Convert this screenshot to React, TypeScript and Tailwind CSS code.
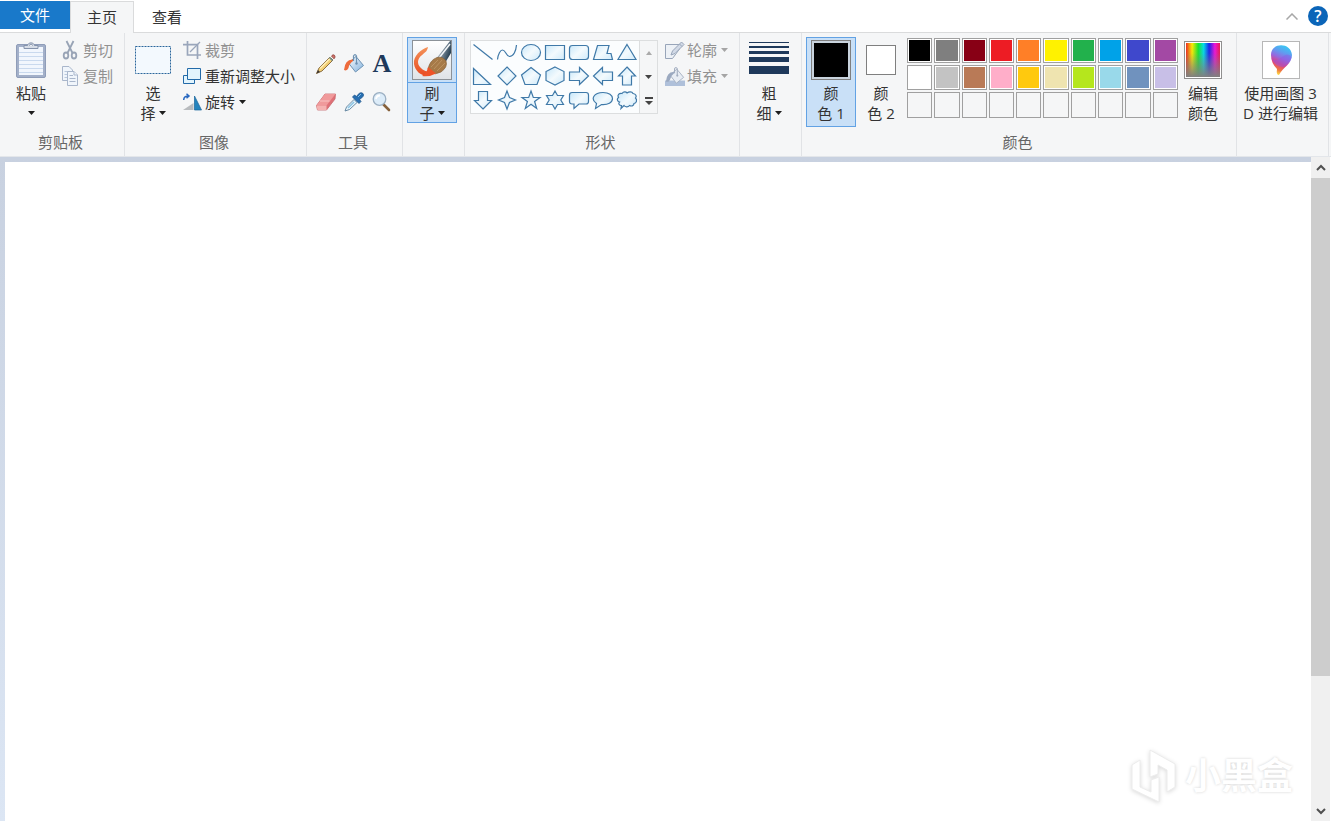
import type { ReactNode } from 'react';

const swatches = [
  '#000000', '#7f7f7f', '#880015', '#ed1c24', '#ff7f27', '#fff200', '#22b14c', '#00a2e8', '#3f48cc', '#a349a4',
  '#ffffff', '#c3c3c3', '#b97a57', '#ffaec9', '#ffc90e', '#efe4b0', '#b5e61d', '#99d9ea', '#7092be', '#c8bfe7',
];

const shapes = [
  { name: '直线', d: 'M2.5 3.5L21.5 18.5' },
  { name: '曲线', d: 'M2.5 18.5C3 13 5.5 9 7.5 9C11 9 11 15.5 14.5 15.5C18.5 15.5 21 10 21.5 4', open: true },
  { name: '椭圆形', d: 'M2.5 11.5A9.5 8 0 1 1 21.5 11.5A9.5 8 0 1 1 2.5 11.5Z' },
  { name: '矩形', d: 'M2.5 4.5H21.5V18.5H2.5Z' },
  { name: '圆角矩形', d: 'M5.5 4.5H18.5Q21.5 4.5 21.5 7.5V15.5Q21.5 18.5 18.5 18.5H5.5Q2.5 18.5 2.5 15.5V7.5Q2.5 4.5 5.5 4.5Z' },
  { name: '多边形', d: 'M2.5 18.5L6.5 4.5H18L16 12.5H20L21.5 18.5Z' },
  { name: '三角形', d: 'M12 3.5L21 18.5H3Z' },
  { name: '直角三角形', d: 'M2.5 3.5L19.5 19.5H2.5Z' },
  { name: '菱形', d: 'M12 2L21 11L12 20L3 11Z' },
  { name: '五边形', d: 'M12 2.5L21.5 10L18 19.5H6L2.5 10Z' },
  { name: '六边形', d: 'M12 2L21 6.5V15.5L12 20L3 15.5V6.5Z' },
  { name: '右箭头', d: 'M2.5 7H12.5V2.5L21.5 11L12.5 19.5V15.5H2.5Z' },
  { name: '左箭头', d: 'M21.5 7H11.5V2.5L2.5 11L11.5 19.5V15.5H21.5Z' },
  { name: '上箭头', d: 'M12 2L20.5 11H16.5V20H7.5V11H3.5Z' },
  { name: '下箭头', d: 'M12 20L20.5 11.5H16.5V2.5H7.5V11.5H3.5Z' },
  { name: '四角星形', d: 'M12 2L14.5 8.5L20.5 11L14.5 13.5L12 20L9.5 13.5L3.5 11L9.5 8.5Z' },
  { name: '五角星形', d: 'M12 2L14.3 8.5H21L15.6 12.5L17.7 19.5L12 15.3L6.3 19.5L8.4 12.5L3 8.5H9.7Z' },
  { name: '六角星形', d: 'M12 2L14.5 6.5H20.5L17.8 11L20.5 15.5H14.5L12 20L9.5 15.5H3.5L6.2 11L3.5 6.5H9.5Z' },
  { name: '圆角矩形标注', d: 'M5 3.5H19Q21.5 3.5 21.5 6V12.5Q21.5 15 19 15H12L7 19.5V15H5Q2.5 15 2.5 12.5V6Q2.5 3.5 5 3.5Z' },
  { name: '椭圆形标注', d: 'M5.5 14.5C-1 10 3 3.5 12 3.5C18 3.5 21.5 6 21.5 9.5C21.5 13.5 17 16 10.5 15.5L4.5 19.5Z' },
  { name: '云形标注', d: 'M7 4.5C8.5 2.5 11 2.5 12 4C14 2.5 17 2.5 18 4.5C21 5 22 7 20.5 9C22.5 11 21.5 14 19 14.5C19 17 16 17.5 14.5 16.5C13 18.5 10 18 9 16.5L6 19.5L6.5 16.5C4 16.5 3 14.5 4.5 13C1.5 12 2 9.5 3.5 8.5C2 6 4 4 7 4.5Z' },
];

function Arrow({ muted = false }: { muted?: boolean }) {
  return (
    <svg width="7" height="4" viewBox="0 0 7 4" className={muted ? 'fill-[#a5a5a5]' : 'fill-[#1e1e1e]'}>
      <path d="M0 0H7L3.5 4Z" />
    </svg>
  );
}

function Group({ label, className, children }: { label?: string; className: string; children: ReactNode }) {
  return (
    <section className={`flex shrink-0 flex-col border-r border-[#e1e3e6] pt-1 pb-1 ${className}`}>
      <div className="flex h-[95px] items-start">{children}</div>
      <div className="h-5 pr-[3px] text-center text-[#666]">{label}</div>
    </section>
  );
}

function LargeButton({ icon, children, className = 'w-[50px]' }: { icon: ReactNode; children: ReactNode; className?: string }) {
  return (
    <button className={`flex shrink-0 flex-col items-center ${className}`}>
      <span className="flex h-[46px] items-center justify-center">{icon}</span>
      {children}
    </button>
  );
}

function SmallButton({ icon, label, disabled = false, arrow = false }: { icon: ReactNode; label: string; disabled?: boolean; arrow?: boolean }) {
  return (
    <button disabled={disabled} className="flex h-[26px] items-center gap-1 whitespace-nowrap disabled:text-[#919191]">
      {icon}
      <span>{label}</span>
      {arrow && <Arrow muted={disabled} />}
    </button>
  );
}

function ClipboardIcon() {
  return (
    <svg width="32" height="38" viewBox="0 0 32 38">
      <rect x="1.5" y="3.5" width="29" height="33" rx="1.5" fill="#a3b0c9" stroke="#8f9db9" />
      <rect x="4" y="6" width="24" height="28" fill="#f1f6fd" />
      <path d="M4 11.5H28M4 15.5H28M4 19.5H28M4 23.5H28M4 27.5H28M4 31.5H28" stroke="#c9d9ee" />
      <path d="M9 7.5V4.5H12.5C13 1 19 1 19.5 4.5H23V7.5Z" fill="#d7dde7" stroke="#8593ab" />
      <path d="M14 4.5Q16 1.5 18 4.5" fill="#fff" stroke="#8593ab" />
    </svg>
  );
}

function CutIcon() {
  return (
    <svg width="18" height="20" viewBox="0 0 18 20" fill="none" stroke="#98a3b5" strokeWidth="1.8">
      <path d="M5.5 1L11.5 13M12.5 1L6.5 13" />
      <ellipse cx="5" cy="15.5" rx="2.3" ry="3" />
      <ellipse cx="13" cy="15.5" rx="2.3" ry="3" />
    </svg>
  );
}

function CopyIcon() {
  return (
    <svg width="18" height="20" viewBox="0 0 18 20" fill="#f0f5fb" stroke="#a9b6cb">
      <path d="M1.5 .5H8L11.5 4V14.5H1.5Z" />
      <path d="M3.5 5.5H7M3.5 8.5H7M3.5 11.5H7" stroke="#b9c8dd" />
      <path d="M6.5 5.5H13L16.5 9V19.5H6.5Z" />
      <path d="M13 5.5V9H16.5M8.5 9.5H12M8.5 12.5H14.5M8.5 15.5H14.5" />
    </svg>
  );
}

function CropIcon() {
  return (
    <svg width="18" height="18" viewBox="0 0 18 18" fill="none" stroke="#9aa6bb">
      <path d="M0 3.7H14.5V18M4.5 0V14H18" strokeWidth="1.7" />
      <path d="M7 11L17 1" strokeWidth="1.2" />
    </svg>
  );
}

function ResizeIcon() {
  return (
    <svg width="18" height="16" viewBox="0 0 18 16" fill="#e2f4fd" stroke="#236aa8">
      <path d="M.5 7.5H11.5V15.5H.5Z" />
      <path d="M4.5 .5H17.5V11.5H4.5Z" />
    </svg>
  );
}

function RotateIcon() {
  return (
    <svg width="19" height="18" viewBox="0 0 19 18" className="-mr-px">
      <path d="M0 17L10.5 10V17Z" fill="#b8bbbe" />
      <path d="M11.5 3L18.5 17H11.5Z" fill="#2584bd" stroke="#17649b" strokeWidth=".7" />
      <path d="M.7 7Q.8 3 5.5 3M3.5 .8L6 3L3.5 5.2" fill="none" stroke="#2868c0" strokeWidth="1.5" />
    </svg>
  );
}

function PencilIcon() {
  return (
    <svg width="22" height="22" viewBox="0 0 22 22">
      <path d="M1.5 20.5L4 15L15 4L18 7L7 18Z" fill="#f2ce74" stroke="#806236" strokeWidth=".9" />
      <path d="M5 15.5L16 4.5" stroke="#fff0b8" strokeWidth="1.5" />
      <path d="M16.5 3Q18 .8 19.5 2.3Q21 4 19 5.8Z" fill="#d4756e" stroke="#893d35" strokeWidth=".8" />
      <path d="M14.5 4.5L17.5 7.5" stroke="#6f9091" strokeWidth="1.6" />
      <path d="M1.5 20.5L3 17L5 19Z" fill="#3b3430" />
    </svg>
  );
}

function BucketIcon({ muted = false }: { muted?: boolean }) {
  const edge = muted ? '#a3aec0' : '#6d92b3';
  return (
    <svg width={muted ? 20 : 22} height={muted ? 20 : 22} viewBox="0 0 22 22" className={muted ? '-mr-0.5' : ''}>
      <defs>
        <linearGradient id="metal" x1="0" x2="1" y1="0" y2="1">
          <stop stopColor="#ffffff" />
          <stop offset="1" stopColor="#7fb0dd" />
        </linearGradient>
      </defs>
      {muted && <rect x="0" y="16" width="22" height="6" fill="#afc0da" />}
      <path d="M5.5 10L13 3.5L20.5 12.5L12.5 19Z" fill={muted ? '#e8edf4' : 'url(#metal)'} stroke={edge} />
      <path d="M10.5 8V3Q12 .2 13.5 3V10" fill="none" stroke={edge} strokeWidth="1.2" />
      <circle cx="13.5" cy="10.5" r="1.2" fill={edge} />
      <path d="M10 6.5Q2 6 1 17Q4 18.5 5.5 15Q6 11 10 8Z" fill={muted ? '#9ba9c0' : '#ee6b3c'} />
    </svg>
  );
}

function EraserIcon() {
  return (
    <svg width="22" height="20" viewBox="0 0 22 20" strokeLinejoin="round">
      <path d="M1.5 13.5L10 2H20.5L20 7L11.5 18H2.5Z" fill="#df7077" stroke="#c66a6f" strokeWidth=".8" />
      <path d="M1.5 13.5L10 2H20.5L11.5 13.5Z" fill="#f09a9b" />
      <path d="M1.5 13.5H11.5V18H2.5Z" fill="#f5b3b2" />
      <path d="M5 9L14.5 9" stroke="#f8c3c2" />
    </svg>
  );
}

function PickerIcon() {
  return (
    <svg width="22" height="22" viewBox="0 0 22 22">
      <path d="M2 20L3.5 16L11 8.5L14 11.5L6.5 18.5Z" fill="#e5f4fc" stroke="#5b7f9b" strokeWidth=".9" />
      <path d="M5 17L11 11" stroke="#8dc5e4" strokeWidth="1.6" />
      <path d="M9.5 6L16 12.5L18 10.5L16.5 8.5Q22 5 20 2.5Q17 0 13.5 5.5L11.5 4Z" fill="#276fb2" stroke="#1b5389" strokeWidth=".8" />
      <path d="M15 6L18 3" stroke="#7dbceb" />
    </svg>
  );
}

function MagnifierIcon() {
  return (
    <svg width="22" height="22" viewBox="0 0 22 22">
      <path d="M12.5 13.5L18 19" stroke="#86613c" strokeWidth="2.6" strokeLinecap="round" />
      <circle cx="8.5" cy="8" r="6.3" fill="#dcecf9" stroke="#9bafc2" strokeWidth="1.3" />
      <path d="M5 8Q5.5 4.5 9 4.5" stroke="#fff" strokeWidth="1.8" fill="none" />
    </svg>
  );
}

function BrushIcon() {
  return (
    <svg width="40" height="40" viewBox="0 0 40 40">
      <defs>
        <linearGradient id="paint" x1="0" x2="0" y1="0" y2="1">
          <stop stopColor="#f4935a" />
          <stop offset="1" stopColor="#e84a20" />
        </linearGradient>
        <linearGradient id="handle" x1="0" x2="1" y1="0" y2=".5">
          <stop stopColor="#e9edf0" />
          <stop offset=".5" stopColor="#8696a4" />
          <stop offset="1" stopColor="#263e50" />
        </linearGradient>
        <linearGradient id="paper" x1="0" x2="0" y1="0" y2="1">
          <stop stopColor="#ffffff" />
          <stop offset="1" stopColor="#dfe3e7" />
        </linearGradient>
      </defs>
      <rect x=".5" y=".5" width="39" height="39" fill="url(#paper)" stroke="#8c9298" />
      <path d="M16 7C9 9 1 16 2 24C3 31 9 36 16 36L22 33C13 32 6 28 6 22C6 16 14 13 15 10Q16 8 16 7Z" fill="url(#paint)" />
      <path d="M24 19L38 1H39V13L33 23Z" fill="url(#handle)" />
      <path d="M27 18L38 4" stroke="#f6f8fa" strokeWidth="1.5" />
      <path d="M16 29Q18 20 25 17.5Q31 16 34 21Q36 27 29 32Q23 35 19 33Z" fill="#a67a48" stroke="#87623b" strokeWidth=".7" />
      <path d="M10 36Q15 33 16 27L24 33.5Q18 37 10 36Z" fill="#ee5328" />
      <path d="M19 27L26 20M22 29L30 20M25 31L33 23" stroke="#c09868" strokeWidth=".8" />
    </svg>
  );
}

function OutlineIcon() {
  return (
    <svg width="20" height="18" viewBox="0 0 20 18" className="-mr-0.5" fill="#edf1f6" stroke="#98a5b9">
      <path d="M.5 3.5H14.5V8L7.5 17.5H.5Z" />
      <path d="M6 14L7.5 10L16.5 1L19 3.5L10 12.5Z" fill="#d2dae7" />
      <path d="M14.5 3L17 5.5" />
    </svg>
  );
}

function RainbowIcon() {
  return (
    <svg width="38" height="38" viewBox="0 0 38 38">
      <defs>
        <linearGradient id="hues">
          <stop stopColor="#f02920" />
          <stop offset=".18" stopColor="#ffee00" />
          <stop offset=".36" stopColor="#15e82c" />
          <stop offset=".52" stopColor="#00ddeb" />
          <stop offset=".68" stopColor="#1721ef" />
          <stop offset=".85" stopColor="#f112d9" />
          <stop offset="1" stopColor="#ee174c" />
        </linearGradient>
        <linearGradient id="shade" x1="0" x2="0" y1="0" y2="1">
          <stop stopColor="#808080" stopOpacity="0" />
          <stop offset=".3" stopColor="#808080" stopOpacity=".1" />
          <stop offset="1" stopColor="#808080" />
        </linearGradient>
      </defs>
      <rect x=".5" y=".5" width="37" height="37" fill="#fff" stroke="#8f8f8f" />
      <rect x="2" y="2" width="34" height="34" fill="url(#hues)" />
      <rect x="2" y="2" width="34" height="34" fill="url(#shade)" />
    </svg>
  );
}

function Paint3DIcon() {
  return (
    <svg width="38" height="38" viewBox="0 0 38 38">
      <defs>
        <linearGradient id="drop" x1=".7" x2=".4" y1="0" y2="1">
          <stop stopColor="#35cbf3" />
          <stop offset=".25" stopColor="#5f9df0" />
          <stop offset=".45" stopColor="#9569df" />
          <stop offset=".65" stopColor="#df3f83" />
          <stop offset=".85" stopColor="#ef7740" />
          <stop offset="1" stopColor="#ffda45" />
        </linearGradient>
      </defs>
      <rect x=".5" y=".5" width="37" height="37" fill="#fff" stroke="#b7b7b7" />
      <path d="M9 14C9 1 29 1 30 14C30 23 21 26 17 34Q14 34 15 28Q9 22 9 14Z" fill="url(#drop)" />
      <path d="M9.500 17Q14 22 20 16Q26 11 29.500 16Q28 21 22 26Q13 26 9.500 17Z" fill="#8b5ae6" opacity=".45" />
    </svg>
  );
}

function ShapeGallery() {
  return (
    <div className="mt-[3px] ml-[5px] flex border border-[#dcdedf]">
      <svg width="0" height="0" className="absolute">
        <defs>
          <linearGradient id="glass" gradientUnits="userSpaceOnUse" x1="4" x2="20" y1="3" y2="20">
            <stop stopColor="#c9e8fa" />
            <stop offset=".5" stopColor="#f4fafd" />
            <stop offset="1" stopColor="#cfeafa" />
          </linearGradient>
        </defs>
      </svg>
      <div className="grid grid-cols-7 bg-[#fbfdfe]">
        {shapes.map((shape) => (
          <button key={shape.name} aria-label={shape.name} className="size-6">
            <svg width="24" height="24" viewBox="0 0 24 24" fill={shape.open ? 'none' : 'url(#glass)'} stroke="#3f79a8" strokeWidth="1.2">
              <path d={shape.d} />
            </svg>
          </button>
        ))}
      </div>
      <div className="flex w-[18px] flex-col border-l border-[#dcdedf]">
        <button aria-label="向上滚动" disabled className="flex h-6 items-center justify-center">
          <svg width="6" height="4" viewBox="0 0 6 4" fill="#aaa"><path d="M0 4H6L3 0Z" /></svg>
        </button>
        <button aria-label="向下滚动" className="flex h-6 items-center justify-center">
          <svg width="7" height="4" viewBox="0 0 7 4" fill="#444"><path d="M0 0H7L3.5 4Z" /></svg>
        </button>
        <button aria-label="全部形状" className="flex h-6 items-center justify-center">
          <svg width="8" height="8" viewBox="0 0 8 8" fill="#444"><path d="M0 0H8V2H0ZM0 4H8L4 8Z" /></svg>
        </button>
      </div>
    </div>
  );
}

function Tabs() {
  return (
    <header className="flex h-[33px] items-stretch border-b border-[#dadbdc] bg-white">
      <nav className="flex pt-px">
        <button className="h-7 w-[70px] bg-[#1979ca] text-white">文件</button>
        <button className="-mb-px w-16 border-x border-t border-[#dadbdc] bg-[#f5f6f7] pb-0.5">主页</button>
        <button className="w-[66px]">查看</button>
      </nav>
      <div className="ml-auto flex items-center gap-2.5 pr-[3px]">
        <button aria-label="折叠功能区">
          <svg width="12" height="7" viewBox="0 0 12 7" fill="none" stroke="#a7a7a7" strokeWidth="1.5"><path d="M.5 6.5L6 1L11.5 6.5" /></svg>
        </button>
        <button className="size-5 rounded-full bg-[#0b65b8] text-base leading-5 font-semibold text-white">?</button>
      </div>
    </header>
  );
}

function Ribbon() {
  return (
    <div className="flex overflow-hidden border-b border-[#e3e6ea] bg-[#f5f6f7]">
      <Group label="剪贴板" className="w-[125px]">
        <LargeButton className="ml-1.5 w-[50px]" icon={<ClipboardIcon />}>
          <span>粘贴</span>
          <span className="flex h-5 items-center"><Arrow /></span>
        </LargeButton>
        <div className="ml-[5px]">
          <SmallButton icon={<CutIcon />} label="剪切" disabled />
          <SmallButton icon={<CopyIcon />} label="复制" disabled />
        </div>
      </Group>

      <Group label="图像" className="w-[182px]">
        <LargeButton
          className="ml-[3px] w-[50px]"
          icon={
            <svg width="36" height="28" viewBox="0 0 36 28">
              <rect x=".5" y=".5" width="35" height="27" fill="#f3f9fe" stroke="#2b669c" strokeDasharray="2 1" />
            </svg>
          }
        >
          <span>选</span>
          <span className="flex items-center gap-[3px]">择<Arrow /></span>
        </LargeButton>
        <div className="ml-[5px]">
          <SmallButton icon={<CropIcon />} label="裁剪" disabled />
          <SmallButton icon={<ResizeIcon />} label="重新调整大小" />
          <SmallButton icon={<RotateIcon />} label="旋转" arrow />
        </div>
      </Group>

      <Group label="工具" className="w-24">
        <div className="mt-2 ml-[5px] grid grid-cols-3">
          <button aria-label="铅笔" className="flex h-[38px] w-7 items-center justify-center"><PencilIcon /></button>
          <button aria-label="用颜色填充" className="flex h-[38px] w-7 items-center justify-center"><BucketIcon /></button>
          <button className="flex h-[38px] w-7 items-center justify-center font-['Liberation_Serif',serif] text-[26px] leading-none font-bold text-[#1e395b]">A</button>
          <button aria-label="橡皮擦" className="flex h-[38px] w-7 items-center justify-center"><EraserIcon /></button>
          <button aria-label="颜色选取器" className="flex h-[38px] w-7 items-center justify-center"><PickerIcon /></button>
          <button aria-label="放大镜" className="flex h-[38px] w-7 items-center justify-center"><MagnifierIcon /></button>
        </div>
      </Group>

      <Group className="w-[62px]">
        <button className="ml-1 flex w-[50px] flex-col items-center bg-[#c9e0f7] outline-1 -outline-offset-1 outline-[#62a2e4]">
          <span className="flex h-[46px] w-full items-center justify-center border-b border-[#62a2e4]"><BrushIcon /></span>
          <span>刷</span>
          <span className="flex items-center gap-[3px]">子<Arrow /></span>
        </button>
      </Group>

      <Group label="形状" className="w-[275px]">
        <ShapeGallery />
        <div className="ml-[7px]">
          <SmallButton icon={<OutlineIcon />} label="轮廓" disabled arrow />
          <SmallButton icon={<BucketIcon muted />} label="填充" disabled arrow />
        </div>
      </Group>

      <Group className="w-[62px]">
        <LargeButton
          className="ml-1 w-[50px]"
          icon={
            <svg width="40" height="36" viewBox="0 0 40 36" fill="#1e395b">
              <path d="M0 0H40V1H0ZM0 4H40V6H0ZM0 9H40V12H0ZM0 15H40V20H0ZM0 24H40V32H0Z" />
            </svg>
          }
        >
          <span>粗</span>
          <span className="flex items-center gap-[3px]">细<Arrow /></span>
        </LargeButton>
      </Group>

      <Group label="颜色" className="w-[435px]">
        <button className="ml-1 flex h-[90px] w-[50px] shrink-0 flex-col items-center bg-[#c9e0f7] outline-1 -outline-offset-1 outline-[#62a2e4]">
          <span className="flex h-[46px] items-center">
            <span className="size-10 border border-[#7f7f7f] bg-black outline-2 -outline-offset-3 outline-[#c9d3dd]" />
          </span>
          <span>颜</span>
          <span>色 1</span>
        </button>
        <LargeButton icon={<span className="size-[30px] border border-[#7f7f7f] bg-white" />}>
          <span>颜</span>
          <span>色 2</span>
        </LargeButton>
        <div className="mt-px ml-px grid w-[271px] shrink-0 grid-cols-10 gap-0.5">
          {swatches.map((color) => (
            <button key={color} aria-label={color} className="h-[25px] border border-[#a0a0a0] bg-white p-px">
              <span className="block h-full" style={{ backgroundColor: color }} />
            </button>
          ))}
          {Array.from({ length: 10 }, (_, i) => (
            <button key={i} aria-label={`自定义颜色 ${i + 1}`} className="h-[26px] border border-[#a0a0a0]" />
          ))}
        </div>
        <LargeButton icon={<RainbowIcon />}>
          <span>编辑</span>
          <span>颜色</span>
        </LargeButton>
      </Group>

      <Group className="w-[92px]">
        <LargeButton className="w-[87px]" icon={<Paint3DIcon />}>
          <span className="whitespace-nowrap">使用画图 3</span>
          <span className="whitespace-nowrap">D 进行编辑</span>
        </LargeButton>
      </Group>
    </div>
  );
}

function ScrollBar() {
  return (
    <div className="flex w-5 shrink-0 flex-col border-r border-white bg-[#f0f0f0]">
      <button aria-label="向上" className="flex h-[21px] items-center justify-center">
        <svg width="10" height="7" viewBox="0 0 10 7" fill="none" stroke="#505050" strokeWidth="2"><path d="M1 6L5 2L9 6" /></svg>
      </button>
      <div className="flex-1">
        <div className="h-4/5 bg-[#cdcdcd]" />
      </div>
      <button aria-label="向下" className="flex h-5 items-center justify-center">
        <svg width="10" height="7" viewBox="0 0 10 7" fill="none" stroke="#505050" strokeWidth="2"><path d="M1 1L5 5L9 1" /></svg>
      </button>
    </div>
  );
}

function Watermark() {
  return (
    <div className="absolute right-[18px] bottom-[18px] flex items-center gap-2 text-white">
      <svg width="46" height="54" viewBox="0 0 46 54" fill="#fff" stroke="#ececec" className="drop-shadow-sm">
        <path d="M1 16L9 11V38L20 43V31L28 28V53L1 40Z" />
        <path d="M19 1L44 15V38L36 43V21L27 16V25L19 28Z" />
      </svg>
      <span className="text-4xl font-bold text-shadow-[0_0_3px_#d2d2d2]">小黑盒</span>
    </div>
  );
}

export default function App() {
  return (
    <div className="flex h-screen flex-col overflow-hidden bg-white font-['Open_Sans','Noto_Sans_CJK_SC',sans-serif] text-[15px] leading-5 text-[#333]">
      <Tabs />
      <Ribbon />
      <main className="flex min-h-0 flex-1">
        <div className="flex flex-1 bg-linear-to-b from-[#c8d1e0] to-[#dce6f4] pt-[5px] pl-[5px]">
          <div className="relative flex-1 bg-white">
            <Watermark />
          </div>
        </div>
        <ScrollBar />
      </main>
    </div>
  );
}
